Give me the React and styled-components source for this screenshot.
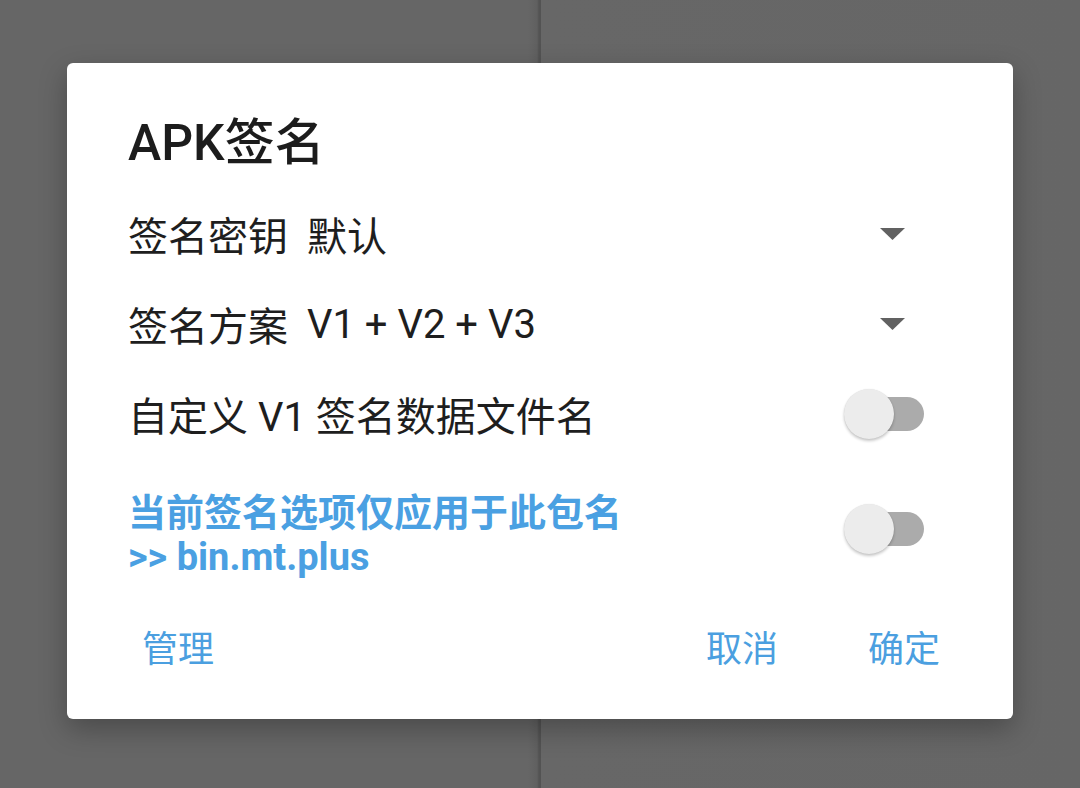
import React, { useState } from 'react'
import styled, { createGlobalStyle } from 'styled-components'

const GlobalStyle = createGlobalStyle`
  html, body {
    margin: 0;
    padding: 0;
    height: 100%;
  }
  body {
    font-family: Roboto, "Noto Sans CJK SC", sans-serif;
    background: linear-gradient(
      to right,
      #666666 0,
      #666666 528px,
      #606060 537px,
      #535353 539px,
      #535353 541px,
      #676767 541px,
      #666666 100%
    );
  }
`

const Screen = styled.div`
  height: 788px;
  display: flex;
  flex-direction: column;
  align-items: center;
  padding-top: 63px;
  box-sizing: border-box;
`

const Dialog = styled.div`
  width: 946px;
  height: 656px;
  box-sizing: border-box;
  background: #ffffff;
  border-radius: 6px;
  box-shadow: 0 10px 28px rgba(0, 0, 0, 0.28);
  padding-top: 50px;
  display: flex;
  flex-direction: column;
`

const Title = styled.div`
  padding-left: 61px;
  margin-bottom: 16px;
  font-size: 50px;
  line-height: 60px;
  font-weight: 500;
  color: #1c1c1c;
`

const Row = styled.div`
  height: 90px;
  display: flex;
  align-items: center;
  padding: 0 89px 0 61px;
  font-size: 40px;
  color: #1e1e1e;
`

const Label = styled.span`
  flex: none;
`

const Value = styled.span`
  margin-left: 19px;
  flex: 1;
`

const Caret = styled.svg`
  width: 25px;
  height: 12px;
  margin-right: 19px;
  flex: none;
`

const SwitchWrap = styled.div`
  position: relative;
  width: 80px;
  height: 50px;
  flex: none;
  margin-left: auto;
  margin-top: ${({ $offset }) => $offset || 0}px;
  cursor: pointer;
`

const Track = styled.div`
  position: absolute;
  left: 7px;
  top: 8px;
  width: 73px;
  height: 34px;
  border-radius: 17px;
  background: ${({ $on }) => ($on ? '#9ccbef' : '#ababab')};
`

const Thumb = styled.div`
  position: absolute;
  top: 0;
  left: ${({ $on }) => ($on ? '30px' : '0')};
  width: 50px;
  height: 50px;
  border-radius: 50%;
  background: ${({ $on }) => ($on ? '#4a9fe0' : '#ececec')};
  box-shadow: 0 2px 3px rgba(0, 0, 0, 0.22), 0 0 1px rgba(0, 0, 0, 0.12);
`

const ScopeRow = styled.div`
  display: flex;
  align-items: flex-start;
  margin-top: 32px;
  padding: 0 89px 0 61px;
`

const ScopeText = styled.div`
  font-size: 38px;
  line-height: 44px;
  font-weight: 700;
  color: #4aa0e2;
`

const Footer = styled.div`
  margin-top: 35px;
  display: flex;
  align-items: center;
  padding: 0 57px 0 59px;
`

const Spacer = styled.div`
  flex: 1;
`

const TextButton = styled.div`
  height: 72px;
  line-height: 72px;
  padding: 0 16px;
  font-size: 36px;
  color: #4b9fe0;
  margin-left: ${({ $gap }) => $gap || 0}px;
  cursor: pointer;
`

const Switch = ({ offset }) => {
  const [on, setOn] = useState(false)
  return (
    <SwitchWrap $offset={offset} onClick={() => setOn(!on)}>
      <Track $on={on} />
      <Thumb $on={on} />
    </SwitchWrap>
  )
}

const DropArrow = () => (
  <Caret viewBox="0 0 25 12">
    <polygon points="0,0 25,0 12.5,12" fill="#616161" />
  </Caret>
)

const App = () => {
  return (
    <>
      <GlobalStyle />
      <Screen>
        <Dialog>
          <Title>APK签名</Title>
          <Row>
            <Label>签名密钥</Label>
            <Value>默认</Value>
            <DropArrow />
          </Row>
          <Row>
            <Label>签名方案</Label>
            <Value>V1 + V2 + V3</Value>
            <DropArrow />
          </Row>
          <Row>
            <Label>自定义 V1 签名数据文件名</Label>
            <Switch />
          </Row>
          <ScopeRow>
            <ScopeText>
              当前签名选项仅应用于此包名
              <br />
              &gt;&gt; bin.mt.plus
            </ScopeText>
            <Switch offset={13} />
          </ScopeRow>
          <Footer>
            <TextButton>管理</TextButton>
            <Spacer />
            <TextButton>取消</TextButton>
            <TextButton $gap={58}>确定</TextButton>
          </Footer>
        </Dialog>
      </Screen>
    </>
  )
}

export default App
